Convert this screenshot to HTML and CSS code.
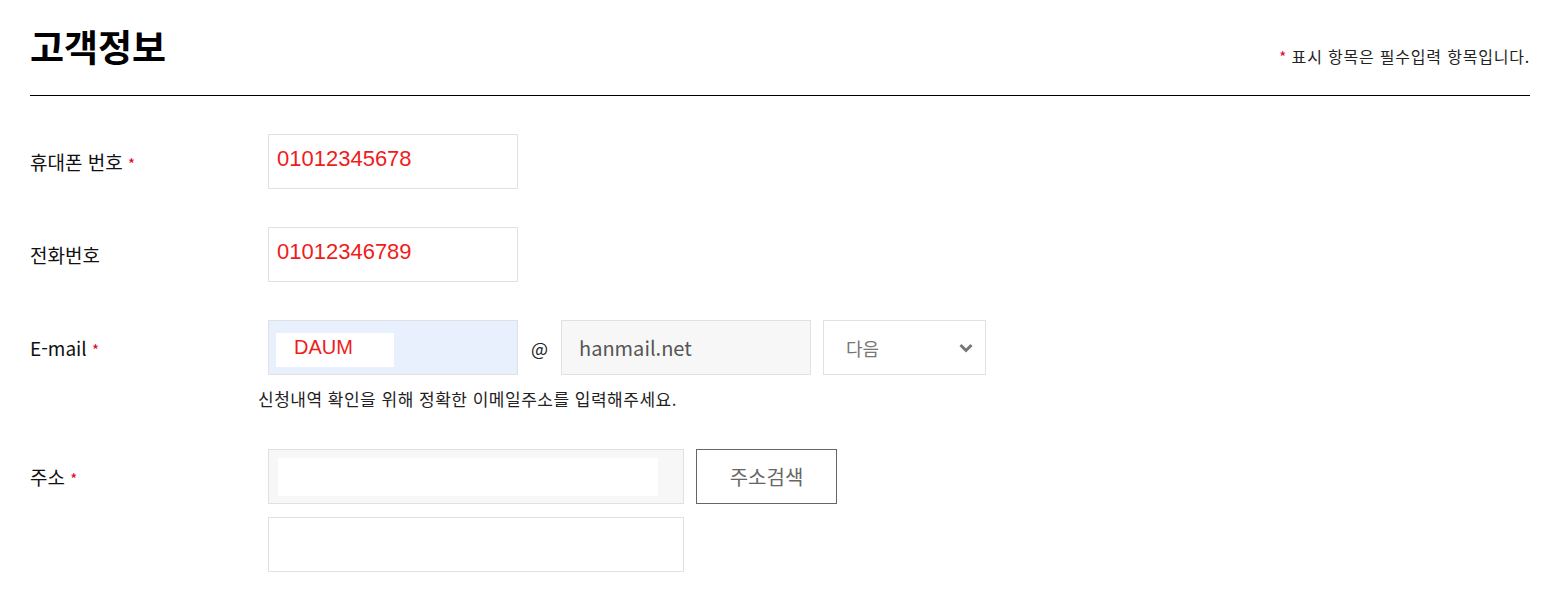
FILE: index.html
```html
<!DOCTYPE html>
<html lang="ko">
<head>
    <meta charset="UTF-8">
    <meta name="viewport" content="width=device-width, initial-scale=1.0">
    <title>고객정보</title>
    <link rel="stylesheet" href="styles.css">
</head>
<body>
    <div class="container">
        <div class="header">
            <h1>고객정보</h1>
            <p class="note"><span class="req">*</span> 표시 항목은 필수입력 항목입니다.</p>
        </div>

        <div class="form">
            <!-- 휴대폰 번호 -->
            <div class="label">휴대폰 번호 <span class="req">*</span></div>
            <div class="fields">
                <div class="field w250"><span class="value">01012345678</span></div>
            </div>

            <!-- 전화번호 -->
            <div class="label">전화번호</div>
            <div class="fields">
                <div class="field w250"><span class="value">01012346789</span></div>
            </div>

            <!-- E-mail -->
            <div class="label">E-mail <span class="req">*</span></div>
            <div class="fields">
                <div class="line">
                    <div class="field w250 autofill"><span class="fill-box">DAUM</span></div>
                    <span class="at">@</span>
                    <div class="field w250 readonly"><span class="domain">hanmail.net</span></div>
                    <div class="field select">
                        <span>다음</span>
                        <svg class="chevron" width="14" height="10" viewBox="0 0 14 10">
                            <path d="M1.5 2 L7 7.5 L12.5 2" fill="none" stroke="#777" stroke-width="3"/>
                        </svg>
                    </div>
                </div>
                <p class="help">신청내역 확인을 위해 정확한 이메일주소를 입력해주세요.</p>
            </div>

            <!-- 주소 -->
            <div class="label">주소 <span class="req">*</span></div>
            <div class="fields">
                <div class="line">
                    <div class="field w416 readonly"><span class="addr-box"></span></div>
                    <button class="btn">주소검색</button>
                </div>
                <div class="field w416 second"></div>
            </div>
        </div>
    </div>
</body>
</html>
```

FILE: styles.css
```css
body {
    margin: 0;
    background: #fff;
    color: #111;
    font-family: "Noto Sans CJK KR", "Noto Sans", sans-serif;
}

.container {
    padding: 0 31px 0 30px;
}

.header {
    display: flex;
    justify-content: space-between;
    align-items: flex-end;
    height: 95px;
    border-bottom: 1px solid #000;
}

h1 {
    margin: 0 0 28px;
    font-size: 37px;
    line-height: 42px;
    font-weight: 700;
    color: #000;
}

.note {
    margin: 0 0 28px;
    font-size: 16px;
    line-height: 20px;
    letter-spacing: 0.8px;
    color: #222;
}

.req {
    color: #e0002a;
    font-size: 15px;
    letter-spacing: 0;
}

.form {
    display: grid;
    grid-template-columns: 238px 1fr;
    row-gap: 38px;
    padding-top: 38px;
}

.label {
    height: 55px;
    line-height: 55px;
    font-size: 19px;
    color: #111;
}

.fields {
    display: flex;
    flex-direction: column;
    align-items: flex-start;
}

.line {
    display: flex;
    align-items: center;
}

.field {
    box-sizing: border-box;
    height: 55px;
    border: 1px solid #e1e1e1;
    background: #fff;
    display: flex;
    align-items: center;
}

.w250 {
    width: 250px;
}

.w416 {
    width: 416px;
}

.value {
    padding-left: 8px;
    margin-top: -5px;
    font-family: "Liberation Sans", Arial, sans-serif;
    font-size: 22px;
    color: #f01c1c;
}

.autofill {
    background: #e8f0fe;
}

.fill-box {
    box-sizing: border-box;
    width: 118px;
    height: 34px;
    margin-left: 7px;
    margin-top: 4px;
    padding: 1px 0 0 18px;
    background: #fff;
    font-family: "Liberation Sans", Arial, sans-serif;
    font-size: 20px;
    line-height: 26px;
    color: #f01c1c;
}

.at {
    width: 43px;
    text-align: center;
    font-size: 18px;
    color: #222;
}

.readonly {
    background: #f7f7f7;
}

.domain {
    padding-left: 17px;
    font-size: 20px;
    color: #555;
}

.select {
    width: 163px;
    margin-left: 12px;
    justify-content: space-between;
    padding: 0 12px 0 22px;
    font-size: 18px;
    color: #777;
}

.help {
    margin: 12px 0 0 -10px;
    font-size: 17px;
    line-height: 24px;
    letter-spacing: 0.5px;
    color: #222;
}

.addr-box {
    width: 380px;
    height: 38px;
    margin-left: 9px;
    background: #fff;
}

.btn {
    box-sizing: border-box;
    width: 141px;
    height: 55px;
    margin-left: 12px;
    border: 1px solid #666;
    background: #fff;
    font-family: "Noto Sans CJK KR", sans-serif;
    font-size: 20px;
    color: #666;
}

.second {
    margin-top: 13px;
}
```
